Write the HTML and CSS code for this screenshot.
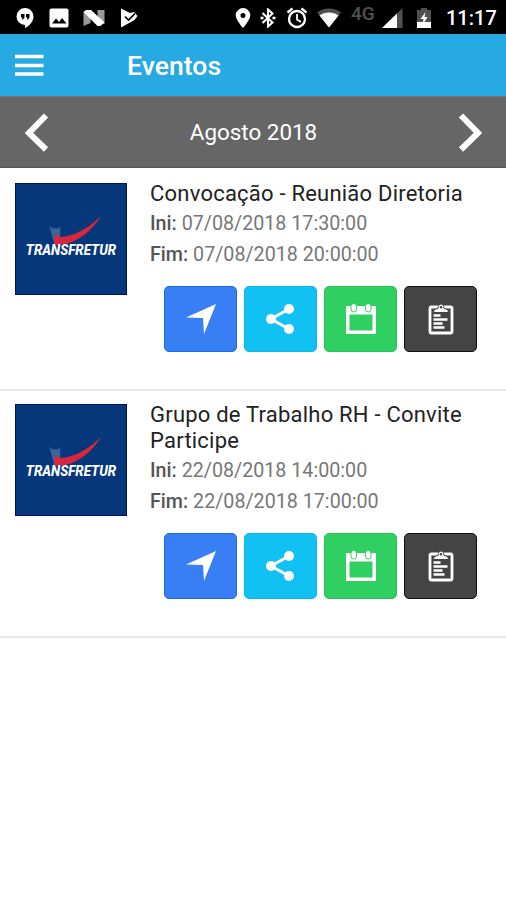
FILE: index.html
```html
<!DOCTYPE html>
<html lang="pt-br">
<head>
    <meta charset="UTF-8">
    <meta name="viewport" content="width=device-width, initial-scale=1.0">
    <title>Eventos</title>
    <link rel="stylesheet" href="styles.css">
</head>
<body>
    <!-- icones reutilizados nos eventos -->
    <svg class="defs" width="0" height="0">
        <symbol id="check" viewBox="0 0 112 112">
            <path d="M34 43l3 2h6l2-2v18h-6z" fill="#38669a"/>
            <path d="M39 51l6 3c14-1 28-8 42-22-9 15-23 26-36 29l-12 1z" fill="#d8263f"/>
        </symbol>
        <symbol id="navigate" viewBox="0 0 32 32">
            <path d="M31 1L19 31l-1-16L1 14.500z" fill="#fff"/>
        </symbol>
        <symbol id="share" viewBox="0 0 32 32">
            <path d="M24 6L6 16l18 10" fill="none" stroke="#fff" stroke-width="3"/>
            <circle cx="24" cy="6" r="5" fill="#fff"/>
            <circle cx="6" cy="16" r="5" fill="#fff"/>
            <circle cx="24" cy="26" r="5" fill="#fff"/>
        </symbol>
        <symbol id="calendar" viewBox="0 0 32 32">
            <path fill-rule="evenodd" d="M1 3h30v28H1zM4.500 11.500v16h23v-16z" fill="#fff"/>
            <rect x="6" y="0.500" width="5.500" height="8.500" rx="2.700" fill="#fff" stroke="#30cf61" stroke-width="1"/>
            <rect x="20.500" y="0.500" width="5.500" height="8.500" rx="2.700" fill="#fff" stroke="#30cf61" stroke-width="1"/>
        </symbol>
        <symbol id="clipboard" viewBox="0 0 26 32">
            <rect x="2" y="4" width="22" height="26" rx="1.500" fill="none" stroke="#fff" stroke-width="2.800"/>
            <path d="M5.500 9.500c0-3 3-4 4.500-4 0-6 6-6 6 0 1.500 0 4.500 1 4.500 4z" fill="#fff" stroke="#444" stroke-width="1"/>
            <circle cx="13" cy="4.200" r="1.200" fill="#444"/>
            <path d="M5.500 12.500h7M5.500 16.500h14M5.500 20.500h9M5.500 24.500h11" stroke="#fff" stroke-width="2.300"/>
        </symbol>
    </svg>

    <div class="status">
        <div class="status-left">
            <svg width="18" height="22" viewBox="0 0 18 22">
                <path d="M9 1a8.500 8.500 0 0 0 0 17v3c4-2 8.500-6 8.500-11.500A8.500 8.500 0 0 0 9 1z" fill="#fff"/>
                <path d="M5 7h3.500v3.500L7 12.500H5.800l.7-2H5zM10 7h3.500v3.500l-1.500 2h-1.200l.7-2H10z" fill="#000"/>
            </svg>
            <svg width="20" height="20" viewBox="0 0 20 20">
                <rect x="0.500" y="0.500" width="19" height="19" rx="2" fill="#fff"/>
                <path d="M3 15.500l4-5 3 3.500 3-4 4.500 5.500z" fill="#000"/>
            </svg>
            <svg width="22" height="18" viewBox="0 0 22 18">
                <path d="M0.500 3v14l7-3V3zM21.500 1v14l-7-2V1z" fill="#999"/>
                <path d="M0.500 3L3 1h5l13.500 12.500-4 3.500h-3z" fill="#fff"/>
            </svg>
            <svg width="18" height="20" viewBox="0 0 18 20">
                <path d="M1 0.500l9 4.500 4-1 3.500 4-3 4L1 19.500z" fill="#fff"/>
                <path d="M5 8.500l3.500 3.500 6.500-6.500" fill="none" stroke="#000" stroke-width="1.600"/>
            </svg>
        </div>
        <div class="status-right">
            <svg class="pin" width="16" height="20" viewBox="0 0 16 20">
                <path fill-rule="evenodd" d="M8 0a7.300 7.300 0 0 0-7.300 7.300C0.700 12 8 20 8 20s7.300-8 7.300-12.700A7.300 7.300 0 0 0 8 0zm0 5a2.500 2.500 0 1 1 0 5 2.500 2.500 0 0 1 0-5z" fill="#fff"/>
            </svg>
            <svg class="bluetooth" width="16" height="20" viewBox="0 0 16 20">
                <path d="M2.500 5l10 9.500L8 18.500V1.500l4.500 4L2.500 15" fill="none" stroke="#fff" stroke-width="2.100"/>
                <path d="M0.500 8.700h3v2.600h-3zM12.500 8.700h3v2.600h-3z" fill="#fff"/>
            </svg>
            <svg class="alarm" width="22" height="22" viewBox="0 0 22 22">
                <circle cx="11" cy="12" r="8" fill="none" stroke="#fff" stroke-width="2.300"/>
                <path d="M1.500 5.500l5-4M20.500 5.500l-5-4" stroke="#fff" stroke-width="2.300"/>
                <path d="M11 7v5.500l4 2.500" fill="none" stroke="#fff" stroke-width="1.800"/>
            </svg>
            <svg class="wifi" width="24" height="20" viewBox="0 0 24 20">
                <path d="M0 4.500C7-1 17-1 24 4.500L12 19.500z" fill="#505050"/>
                <path d="M2.500 7.500c5-4 14-4 19 0L12 19.500z" fill="#fff"/>
            </svg>
            <span class="network">4G</span>
            <svg class="signal" width="21" height="20" viewBox="0 0 21 20">
                <path d="M0 20L20.500 0v20z" fill="#505050"/>
                <path d="M0 20L15 5.500V20z" fill="#fff"/>
            </svg>
            <svg class="battery" width="14" height="20" viewBox="0 0 14 20">
                <path d="M0 2h4V0h6v2h4v18H0z" fill="#505050"/>
                <path d="M0 14h14v6H0z" fill="#fff"/>
                <path d="M8.500 4L3.500 11h3l-1 6 5-8h-3z" fill="#fff"/>
            </svg>
            <span class="clock">11:17</span>
        </div>
    </div>

    <header>
        <svg class="menu" width="29" height="24" viewBox="0 0 29 24">
            <path d="M0 3.500h28.500M0 12.500h28.500M0 21h28.500" stroke="#fff" stroke-width="3.600"/>
        </svg>
        <h1>Eventos</h1>
    </header>

    <nav class="month">
        <svg width="24" height="42" viewBox="0 0 24 42">
            <path d="M21 4.500L4 22l17 16.500" fill="none" stroke="#fff" stroke-width="6"/>
        </svg>
        <span>Agosto 2018</span>
        <svg width="24" height="42" viewBox="0 0 24 42">
            <path d="M3 4.500L20 22 3 38.500" fill="none" stroke="#fff" stroke-width="6"/>
        </svg>
    </nav>

    <section class="events">
        <div class="event">
            <svg class="thumb" viewBox="0 0 112 112">
                <use href="#check"/>
                <text x="10" y="72.500" textLength="92" lengthAdjust="spacingAndGlyphs">TRANSFRETUR</text>
            </svg>
            <div class="info">
                <h2>Convocação - Reunião Diretoria</h2>
                <p><strong>Ini:</strong> 07/08/2018 17:30:00</p>
                <p><strong>Fim:</strong> 07/08/2018 20:00:00</p>
                <div class="actions">
                    <button class="btn blue"><svg><use href="#navigate"/></svg></button>
                    <button class="btn cyan"><svg><use href="#share"/></svg></button>
                    <button class="btn green"><svg><use href="#calendar"/></svg></button>
                    <button class="btn dark"><svg><use href="#clipboard"/></svg></button>
                </div>
            </div>
        </div>
        <div class="event">
            <svg class="thumb" viewBox="0 0 112 112">
                <use href="#check"/>
                <text x="10" y="72.500" textLength="92" lengthAdjust="spacingAndGlyphs">TRANSFRETUR</text>
            </svg>
            <div class="info">
                <h2>Grupo de Trabalho RH - Convite Participe</h2>
                <p><strong>Ini:</strong> 22/08/2018 14:00:00</p>
                <p><strong>Fim:</strong> 22/08/2018 17:00:00</p>
                <div class="actions">
                    <button class="btn blue"><svg><use href="#navigate"/></svg></button>
                    <button class="btn cyan"><svg><use href="#share"/></svg></button>
                    <button class="btn green"><svg><use href="#calendar"/></svg></button>
                    <button class="btn dark"><svg><use href="#clipboard"/></svg></button>
                </div>
            </div>
        </div>
    </section>
</body>
</html>
```

FILE: styles.css
```css
* {
    box-sizing: border-box;
}

body {
    font-family: Roboto, "Liberation Sans", sans-serif;
    margin: 0;
    background-color: #fff;
}

svg {
    display: block;
    flex: none;
}

.defs {
    position: absolute;
}

.status {
    display: flex;
    justify-content: space-between;
    align-items: center;
    height: 34px;
    padding: 1px 11px 0 16px;
    background-color: #000;
    color: #fff;
}

.status-left,
.status-right {
    display: flex;
    align-items: center;
}

.status-left {
    gap: 14.5px;
}

.pin {
    margin-right: 9px;
}

.bluetooth {
    margin-right: 10px;
}

.alarm {
    margin-right: 9px;
}

.wifi {
    margin-right: 10px;
}

.network {
    width: 25px;
    margin: 0 6px 8px 0;
    font-size: 19px;
    line-height: 20px;
    font-weight: 500;
    color: #505050;
}

.signal {
    margin-right: 14px;
}

.battery {
    margin-right: 15px;
}

.clock {
    width: 49px;
    font-size: 20px;
    font-weight: 500;
    white-space: nowrap;
}

header {
    display: flex;
    align-items: center;
    height: 62px;
    padding: 0 15px;
    background-color: #27a9e1;
    color: #fff;
}

header h1 {
    margin: 0 0 0 83px;
    font-size: 26.6px;
    font-weight: 500;
}

.month {
    display: flex;
    justify-content: space-between;
    align-items: center;
    height: 72px;
    padding: 0 24px 0 25px;
    background-color: #666;
    border-top: 1px solid #777;
    border-bottom: 1px solid #555;
    color: #fff;
    font-size: 22.4px;
}

.events {
    margin-top: 2px;
}

.event {
    display: flex;
    gap: 23px;
    padding: 13px 29px 37px 15px;
    border-bottom: 2px solid #e8e8e8;
}

.thumb {
    width: 112px;
    height: 112px;
    background-color: #05377a;
    border: 1px solid #01115f;
}

.thumb text {
    font-family: Roboto, "Liberation Sans", sans-serif;
    font-size: 14px;
    font-weight: 800;
    font-style: italic;
    fill: #fff;
}

.info {
    flex: 1;
    margin-top: -2px;
}

.info h2 {
    margin: 0 0 1px;
    font-size: 22px;
    font-weight: 400;
    line-height: 26px;
    letter-spacing: 0.22px;
    color: #222;
}

.info p {
    margin: 0;
    font-size: 19.7px;
    line-height: 31px;
    color: #777;
}

.info strong {
    font-weight: 500;
    color: #555;
}

.actions {
    display: flex;
    justify-content: flex-end;
    gap: 7px;
    margin-top: 16px;
}

.btn {
    display: flex;
    justify-content: center;
    align-items: center;
    width: 73px;
    height: 66px;
    padding: 0;
    border: 1px solid;
    border-radius: 5px;
}

.btn svg {
    width: 32px;
    height: 32px;
}

.blue {
    background-color: #387ef5;
    border-color: #1a6ae8;
}

.cyan {
    background-color: #11c1f3;
    border-color: #0fb5e8;
}

.green {
    background-color: #30cf61;
    border-color: #28c255;
}

.dark {
    background-color: #444;
    border-color: #111;
}
```
